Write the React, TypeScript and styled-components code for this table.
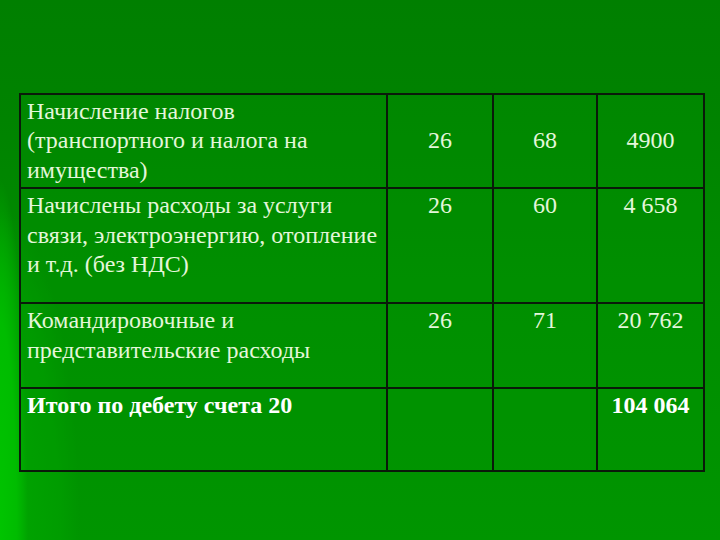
import React from 'react'
import styled, { createGlobalStyle } from 'styled-components'

const GlobalStyle = createGlobalStyle`
  html, body {
    margin: 0;
    padding: 0;
  }
  body {
    width: 720px;
    height: 540px;
    overflow: hidden;
  }
`

type Row = {
  lines: string[]
  a: string
  b: string
  total: string
  height: number
  middle?: boolean
  bold?: boolean
}

const rows: Row[] = [
  {
    lines: ['Начисление налогов', '(транспортного и налога на', 'имущества)'],
    a: '26',
    b: '68',
    total: '4900',
    height: 94,
    middle: true,
  },
  {
    lines: ['Начислены расходы за услуги', 'связи, электроэнергию, отопление', 'и т.д. (без НДС)'],
    a: '26',
    b: '60',
    total: '4 658',
    height: 115,
  },
  {
    lines: ['Командировочные и', 'представительские расходы'],
    a: '26',
    b: '71',
    total: '20 762',
    height: 85,
  },
  {
    lines: ['Итого по дебету счета 20'],
    a: '',
    b: '',
    total: '104 064',
    height: 83,
    bold: true,
  },
]

const App = () => {
  return (
    <>
      <GlobalStyle />
      <Slide>
        <Table>
          {rows.map((r, i) => (
            <React.Fragment key={i}>
              <LabelCell $h={r.height} $middle={r.middle} $bold={r.bold}>
                {r.lines.map((l) => (
                  <Line key={l}>{l}</Line>
                ))}
              </LabelCell>
              <NumCell $h={r.height} $middle={r.middle}>{r.a}</NumCell>
              <NumCell $h={r.height} $middle={r.middle}>{r.b}</NumCell>
              <NumCell $h={r.height} $middle={r.middle} $bold={r.bold}>{r.total}</NumCell>
            </React.Fragment>
          ))}
        </Table>
      </Slide>
    </>
  )
}

export default App

const Slide = styled.div`
  width: 720px;
  height: 540px;
  box-sizing: border-box;
  padding: 93px 0 0 19px;
  background:
    radial-gradient(ellipse 28px 360px at 0% 100%, #00c400 0%, #00bc00 60%, rgba(0, 180, 0, 0) 100%),
    radial-gradient(ellipse 80px 330px at 0% 100%, rgba(0, 168, 0, 0.95) 0%, rgba(0, 160, 0, 0.7) 75%, rgba(0, 150, 0, 0) 100%),
    linear-gradient(to bottom, #007f00 0%, #008300 22%, #008d00 55%, #009500 100%);
`

const Table = styled.div`
  display: grid;
  grid-template-columns: 367px 106px 104px 107px;
  width: fit-content;
  border-top: 2px solid #0a1a0a;
  border-left: 2px solid #0a1a0a;
  font-family: "Liberation Serif", "Times New Roman", serif;
  font-size: 24px;
  color: #e4f6da;
  line-height: 29.5px;
  background: rgba(0, 150, 0, 0.25);
`

const Cell = styled.div<{ $h: number; $middle?: boolean; $bold?: boolean }>`
  box-sizing: border-box;
  height: ${(p) => p.$h}px;
  border-right: 2px solid #0a1a0a;
  border-bottom: 2px solid #0a1a0a;
  display: flex;
  flex-direction: column;
  justify-content: ${(p) => (p.$middle ? 'center' : 'flex-start')};
  font-weight: ${(p) => (p.$bold ? 700 : 400)};
  color: ${(p) => (p.$bold ? '#ffffff' : 'inherit')};
  padding: ${(p) => (p.$middle ? '0 6px' : '2px 6px 0')};
`

const LabelCell = styled(Cell)`
  text-align: left;
`

const Line = styled.div`
  white-space: nowrap;
`

const NumCell = styled(Cell)`
  text-align: center;
`
